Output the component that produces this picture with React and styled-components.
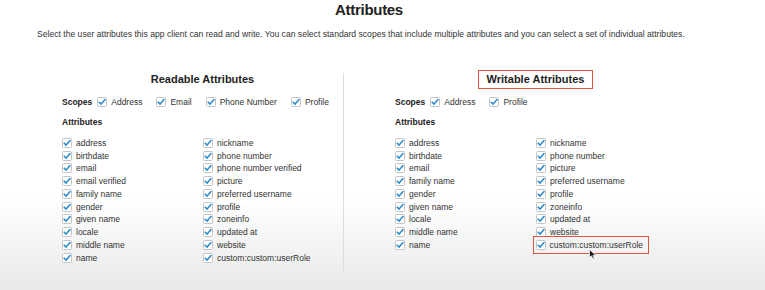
import React from "react";
import styled, { createGlobalStyle } from "styled-components";

const Global = createGlobalStyle`
  html, body { margin: 0; padding: 0; }
  body { font-family: "Liberation Sans", Arial, sans-serif; color: #333; }
`;

const Page = styled.div`
  position: relative;
  width: 765px;
  height: 290px;
  overflow: hidden;
  background: linear-gradient(to bottom, #ffffff 0%, #ffffff 68%, #e8e9e9 100%);
`;

const Title = styled.h1`
  margin: 0;
  padding: 0 27px 0 0;
  font-size: 15px;
  line-height: 19px;
  letter-spacing: -0.3px;
  font-weight: bold;
  text-align: center;
  color: #222;
`;

const Description = styled.p`
  margin: 9px 0 0 37px;
  font-size: 8.6px;
  line-height: 12px;
  color: #333;
  white-space: nowrap;
`;

const Columns = styled.div`
  display: flex;
  align-items: flex-start;
  margin: 30px 0 0 62px;
`;

const Column = styled.div`
  width: 281px;
  margin-left: ${(p) => (p.$offset ? "51px" : "0")};
`;

const Divider = styled.div`
  width: 1px;
  height: 199px;
  margin-top: 3px;
  background: #dcdcdc;
`;

const HeadingRow = styled.div`
  display: flex;
  justify-content: center;
`;

const Heading = styled.h2`
  margin: 0;
  padding: 0 8px;
  font-size: 11px;
  line-height: 17px;
  font-weight: bold;
  color: #222;
  border: 1.5px solid ${(p) => (p.$highlight ? "#d9583f" : "transparent")};
`;

const ScopesRow = styled.div`
  display: flex;
  align-items: center;
  height: 14px;
  margin-top: 5.5px;
`;

const Label = styled.span`
  font-size: 8.5px;
  font-weight: bold;
  color: #222;
  margin-right: 5px;
`;

const Option = styled.label`
  display: flex;
  align-items: center;
  gap: 4px;
  font-size: 8.5px;
  color: #333;
  margin-right: 14px;
  padding: ${(p) => (p.$highlight ? "3px 5px 3px 2px" : "0")};
  border: ${(p) => (p.$highlight ? "1.5px solid #d9583f" : "none")};
  margin-left: ${(p) => (p.$highlight ? "-3.5px" : "0")};
  margin-top: ${(p) => (p.$highlight ? "-4.5px" : "0")};
  margin-bottom: ${(p) => (p.$highlight ? "-4.5px" : "0")};
  width: fit-content;
  white-space: nowrap;
`;

const SectionLabel = styled.div`
  margin-top: 6px;
  height: 14px;
  line-height: 14px;
  font-size: 8.5px;
  font-weight: bold;
  color: #222;
`;

const Grid = styled.div`
  display: grid;
  grid-template-columns: 141px 141px;
  margin-top: 8px;
`;

const List = styled.div`
  display: flex;
  flex-direction: column;
`;

const Item = styled.div`
  height: 12.75px;
  display: flex;
  align-items: center;
`;

const Cursor = styled.svg`
  position: absolute;
  left: 589px;
  top: 249px;
`;

const Check = () => (
  <svg width="10" height="10" viewBox="0 0 10 10" style={{ flex: "none" }}>
    <rect x="0.5" y="0.5" width="9" height="9" rx="1" fill="#fff" stroke="#c4c4c4" />
    <path d="M2.2 5.2 L4.1 7.1 L8 2.6" fill="none" stroke="#2f8ccc" strokeWidth="1.6" strokeLinecap="round" strokeLinejoin="round" />
  </svg>
);

const CheckItem = ({ children, highlight }) => (
  <Option $highlight={highlight}>
    <Check />
    {children}
  </Option>
);

const Panel = ({ title, highlight, offset, scopes, left, right, highlightItem }) => (
  <Column $offset={offset}>
    <HeadingRow>
      <Heading $highlight={highlight}>{title}</Heading>
    </HeadingRow>
    <ScopesRow>
      <Label>Scopes</Label>
      {scopes.map((s) => (
        <CheckItem key={s}>{s}</CheckItem>
      ))}
    </ScopesRow>
    <SectionLabel>Attributes</SectionLabel>
    <Grid>
      <List>
        {left.map((a) => (
          <Item key={a}>
            <CheckItem>{a}</CheckItem>
          </Item>
        ))}
      </List>
      <List>
        {right.map((a) => (
          <Item key={a}>
            <CheckItem highlight={a === highlightItem}>{a}</CheckItem>
          </Item>
        ))}
      </List>
    </Grid>
  </Column>
);

export default function App() {
  return (
    <Page>
      <Global />
      <Title>Attributes</Title>
      <Description>
        Select the user attributes this app client can read and write. You can select standard scopes that include multiple attributes and you can select a set of individual attributes.
      </Description>
      <Columns>
        <Panel
          title="Readable Attributes"
          scopes={["Address", "Email", "Phone Number", "Profile"]}
          left={["address", "birthdate", "email", "email verified", "family name", "gender", "given name", "locale", "middle name", "name"]}
          right={["nickname", "phone number", "phone number verified", "picture", "preferred username", "profile", "zoneinfo", "updated at", "website", "custom:custom:userRole"]}
        />
        <Divider />
        <Panel
          offset
          highlight
          title="Writable Attributes"
          scopes={["Address", "Profile"]}
          left={["address", "birthdate", "email", "family name", "gender", "given name", "locale", "middle name", "name"]}
          right={["nickname", "phone number", "picture", "preferred username", "profile", "zoneinfo", "updated at", "website", "custom:custom:userRole"]}
          highlightItem="custom:custom:userRole"
        />
      </Columns>
      <Cursor width="8" height="11" viewBox="0 0 8 11">
        <path d="M0.5 0.5 L0.5 8.5 L2.5 6.8 L4 10 L5.3 9.4 L3.9 6.3 L6.6 6.2 Z" fill="#111" stroke="#fff" strokeWidth="0.7" />
      </Cursor>
    </Page>
  );
}
